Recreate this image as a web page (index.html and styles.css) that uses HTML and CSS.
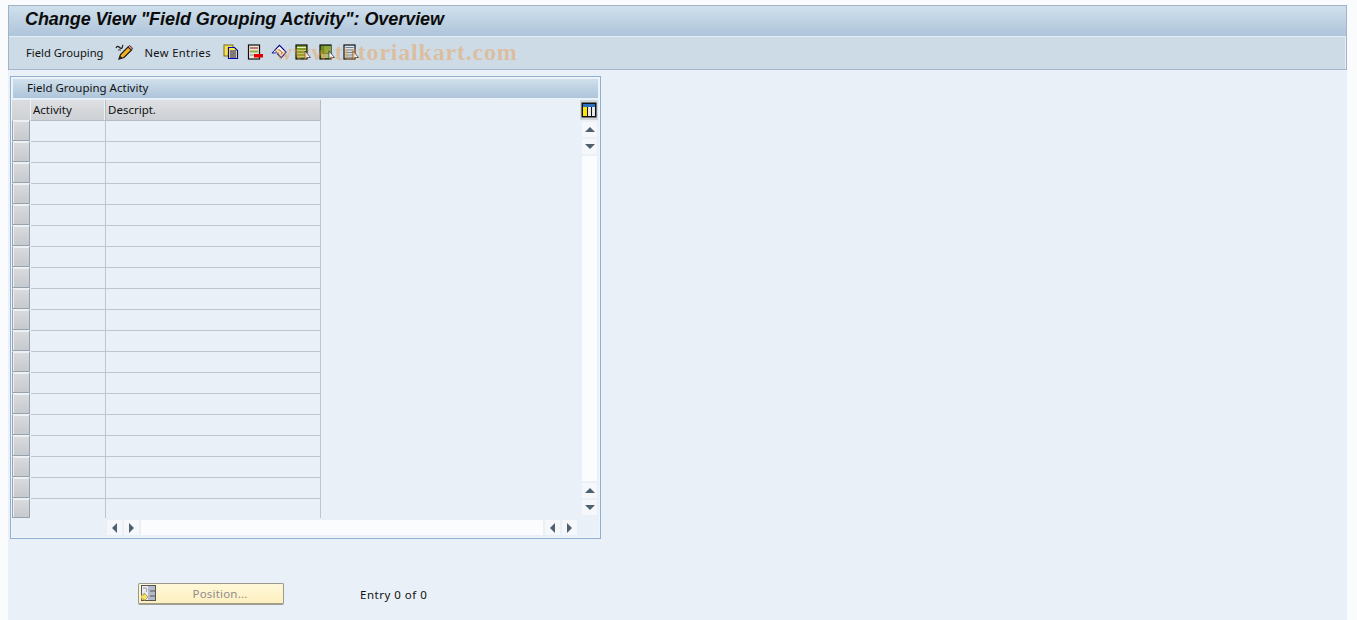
FILE: index.html
```html
<!DOCTYPE html>
<html lang="en">
<head>
<meta charset="utf-8">
<title>Change View "Field Grouping Activity": Overview</title>
<link rel="stylesheet" href="styles.css">
</head>
<body>
<div class="page">
  <header class="chrome">
    <h1 class="title">Change View "Field Grouping Activity": Overview</h1>
    <nav class="toolbar">
      <span class="tool-text">Field Grouping</span>
      <svg class="ico pencil" viewBox="0 0 18 17"><path d="M1 4c1-2 2-2 3-1s2 2 3 1 0-2 1-3" fill="none" stroke="#222" stroke-width="1.200"/><path d="M3 6.500c1-1 2-1 3 0" fill="none" stroke="#222"/><path d="M4 15l1.500-4.500L13 3l3.500 3L9 13.500z" fill="#f6b01c" stroke="#1a1a1a" stroke-width="1.200"/><path d="M13 3l1.500-1.500L17.500 4 16.500 6z" fill="#e88a8a" stroke="#1a1a1a" stroke-width=".8"/><path d="M4 15l1.200-3.200 2 2z" fill="#222"/></svg>
      <span class="tool-text new">New Entries</span>
      <span class="icons">
        <svg class="ico" viewBox="0 0 16 16"><rect x="1" y="1" width="9" height="11" fill="#f4e05a" stroke="#7a6a10"/><path d="M5.500 3.500h6l3 3v8h-9z" fill="#fff23a" stroke="#0000b0" stroke-width="1.200"/><path d="M7 7h6M7 9h6M7 11h6M7 13h6" stroke="#0000b0"/></svg>
        <svg class="ico" viewBox="0 0 16 16"><rect x="1.500" y="1" width="11" height="14" fill="#efe7dc" stroke="#111" stroke-width="1.200"/><path d="M3 4h8" stroke="#a85a48" stroke-width="1.500"/><path d="M3 7.500h8" stroke="#8fae48" stroke-width="2"/><path d="M3 11h4" stroke="#888"/><rect x="7" y="10" width="9" height="3.500" fill="#e80000"/></svg>
        <svg class="ico" viewBox="0 0 17 16"><path d="M1 9l3-3 2 2-1 1z" fill="#fff" stroke="#00008a"/><path d="M4 6l5-5 7 7-5 6-4-4 1-1" fill="#fff" stroke="#00008a" stroke-width="1.200"/><path d="M8 5l4 3.500-1.500 2" fill="none" stroke="#b08a50" stroke-width="1.400"/></svg>
        <svg class="ico" viewBox="0 0 16 16"><rect x="1" y="1" width="11" height="14" fill="#7f9d2a" stroke="#111" stroke-width="1.200"/><path d="M2 3.500h9" stroke="#e3efc5" stroke-width="1"/><path d="M2 6.500h9M2 9.500h9M2 12.500h9" stroke="#cfe0a0" stroke-width=".8"/><path d="M10 7v8l2-1.500 3.500 0z" fill="#fff" stroke="#222" stroke-width=".7"/></svg>
        <svg class="ico" viewBox="0 0 16 16"><rect x="1" y="1" width="11" height="14" fill="#6c8c22" stroke="#111" stroke-width="1.200"/><path d="M5 2v7h7V2z" fill="#8aa63a"/><path d="M2 11h9M2 13h9" stroke="#e6ecd8"/><path d="M10 7v8l2-1.500 3.500 0z" fill="#fff" stroke="#222" stroke-width=".7"/></svg>
        <svg class="ico" viewBox="0 0 16 16"><rect x="1" y="1" width="11" height="14" fill="#dce4ea" stroke="#111" stroke-width="1.200"/><path d="M2.500 3.500h8M2.500 6h8M2.500 8.500h8M2.500 11h8M2.500 13.200h8" stroke="#6d8494" stroke-width="1.100"/><path d="M10 7v8l2-1.500 3.500 0z" fill="#fff" stroke="#222" stroke-width=".7"/></svg>
      </span>
      <span class="watermark">www.tutorialkart.com</span>
    </nav>
  </header>

  <main class="content">
    <section class="panel">
      <h2 class="panel-title">Field Grouping Activity</h2>
      <div class="table-area">
        <div class="grid">
          <div class="row head">
            <div class="sel corner"></div>
            <div class="cell col-a">Activity</div>
            <div class="cell col-d">Descript.</div>
          </div>
          <div class="row first"><div class="sel"></div><div class="cell col-a"></div><div class="cell col-d"></div></div>
          <div class="row"><div class="sel"></div><div class="cell col-a"></div><div class="cell col-d"></div></div>
          <div class="row"><div class="sel"></div><div class="cell col-a"></div><div class="cell col-d"></div></div>
          <div class="row"><div class="sel"></div><div class="cell col-a"></div><div class="cell col-d"></div></div>
          <div class="row"><div class="sel"></div><div class="cell col-a"></div><div class="cell col-d"></div></div>
          <div class="row"><div class="sel"></div><div class="cell col-a"></div><div class="cell col-d"></div></div>
          <div class="row"><div class="sel"></div><div class="cell col-a"></div><div class="cell col-d"></div></div>
          <div class="row"><div class="sel"></div><div class="cell col-a"></div><div class="cell col-d"></div></div>
          <div class="row"><div class="sel"></div><div class="cell col-a"></div><div class="cell col-d"></div></div>
          <div class="row"><div class="sel"></div><div class="cell col-a"></div><div class="cell col-d"></div></div>
          <div class="row"><div class="sel"></div><div class="cell col-a"></div><div class="cell col-d"></div></div>
          <div class="row"><div class="sel"></div><div class="cell col-a"></div><div class="cell col-d"></div></div>
          <div class="row"><div class="sel"></div><div class="cell col-a"></div><div class="cell col-d"></div></div>
          <div class="row"><div class="sel"></div><div class="cell col-a"></div><div class="cell col-d"></div></div>
          <div class="row"><div class="sel"></div><div class="cell col-a"></div><div class="cell col-d"></div></div>
          <div class="row"><div class="sel"></div><div class="cell col-a"></div><div class="cell col-d"></div></div>
          <div class="row"><div class="sel"></div><div class="cell col-a"></div><div class="cell col-d"></div></div>
          <div class="row"><div class="sel"></div><div class="cell col-a"></div><div class="cell col-d"></div></div>
          <div class="row last"><div class="sel"></div><div class="cell col-a"></div><div class="cell col-d"></div></div>
          <div class="hscroll">
            <span class="sb-btn"><i class="tri left"></i></span>
            <span class="sb-btn"><i class="tri right"></i></span>
            <span class="track"></span>
            <span class="sb-btn"><i class="tri left"></i></span>
            <span class="sb-btn"><i class="tri right"></i></span>
          </div>
        </div>
        <aside class="vscroll">
          <span class="config">
            <svg viewBox="0 0 16 16" width="16" height="16"><rect x=".5" y=".5" width="15" height="15" fill="#111"/><rect x="2" y="2" width="12" height="3" fill="#2a6fc0"/><rect x="2" y="5" width="4" height="9" fill="#ffe600"/><rect x="7" y="5" width="3" height="9" fill="#e8e8e8"/><rect x="11" y="5" width="3" height="9" fill="#e8e8e8"/></svg>
          </span>
          <span class="sb-btn v"><i class="tri up"></i></span>
          <span class="sb-btn v"><i class="tri down"></i></span>
          <span class="track"></span>
          <span class="sb-btn v"><i class="tri up"></i></span>
          <span class="sb-btn v"><i class="tri down"></i></span>
        </aside>
      </div>
    </section>

    <div class="footer-row">
      <button class="position" type="button">
        <svg class="pos-ico" viewBox="0 0 16 16" width="16" height="16"><rect x=".5" y=".5" width="14" height="15" fill="#b5b9cc" stroke="#555"/><rect x="1" y="1" width="6" height="14" fill="#e8ecf2"/><path d="M9 6h5M9 11h5" stroke="#555"/><path d="M2 3h3l1 2-1 2" fill="none" stroke="#999"/><path d="M0 10h3V8l4 4-4 4v-2H0z" fill="#f7e56a" stroke="#8a7a20" stroke-width=".6"/></svg>
        <span>Position...</span>
      </button>
      <span class="entry">Entry 0 of 0</span>
    </div>
  </main>
</div>
</body>
</html>
```

FILE: styles.css
```css
* { box-sizing: border-box; }

html, body {
  margin: 0;
  height: 100%;
  background: #fafbfd;
  overflow: hidden;
}

body {
  font-family: "Noto Sans", "Liberation Sans", sans-serif;
  font-size: 11.5px;
  color: #111;
}

.page {
  width: 1339px;
  height: 620px;
  margin-left: 8px;
  padding-top: 5px;
  background: linear-gradient(#fafbfd 0, #fafbfd 5px, #e9f0f7 5px);
}

.chrome {
  border: 1px solid #9fb4c9;
  border-bottom: 1px solid #a3b6ca;
  height: 65px;
}

.title {
  margin: 0;
  height: 31px;
  padding-left: 16px;
  font-family: "Liberation Sans", Arial, sans-serif;
  font-size: 18px;
  font-weight: bold;
  font-style: italic;
  line-height: 27px;
  letter-spacing: -.06px;
  color: #0c0c0c;
  background: linear-gradient(#d0e0ec, #aec4da);
  border-bottom: 1px solid #e7eef5;
  white-space: nowrap;
}

.toolbar {
  position: relative;
  display: flex;
  align-items: center;
  height: 32px;
  padding: 0 0 2px 17px;
  background: #cddbe6;
  border-right: 1px solid #e7eef5;
}

.tool-text {
  font-size: 11.2px;
  white-space: nowrap;
  color: #111;
}

.tool-text.new {
  margin-left: 11px;
  letter-spacing: .35px;
}

.ico {
  display: block;
  width: 16px;
  height: 16px;
  flex: none;
}

.pencil {
  width: 18px;
  height: 17px;
  margin-left: 12px;
}

.icons {
  display: flex;
  align-items: center;
  gap: 8px;
  margin-left: 12px;
}

.watermark {
  position: absolute;
  left: 266px;
  top: 1px;
  font-family: "Liberation Serif", serif;
  font-size: 24px;
  font-weight: bold;
  line-height: 28px;
  letter-spacing: .8px;
  color: rgba(240, 150, 60, .42);
  white-space: nowrap;
  pointer-events: none;
}

.content {
  padding: 6px 0 0 2px;
}

.panel {
  width: 591px;
  height: 463px;
  border: 1px solid #8fb0d0;
  padding: 2px 1px 0;
  box-shadow: inset 0 0 0 1px #f0f5fa;
}

.panel-title {
  margin: 0 1px;
  height: 19px;
  padding-left: 14px;
  font-size: 11.5px;
  font-weight: normal;
  line-height: 17px;
  background: linear-gradient(#d0e0ec, #aec4da);
  color: #111;
}

.table-area {
  display: flex;
  justify-content: space-between;
  padding-top: 2px;
}

.grid {
  width: 310px;
}

.row {
  display: flex;
  height: 21px;
}

.sel {
  width: 18px;
  margin-right: 1px;
  flex: none;
  background: linear-gradient(#d9dbde, #c6c9cd);
  border: 1px solid #98a2ac;
  border-top-color: #eef1f4;
  box-shadow: inset 1px 1px 0 #eef1f4;
}

.cell {
  border-right: 1px solid #bcc6d2;
  border-top: 1px solid #bcc6d2;
  padding-left: 2px;
  line-height: 20px;
}

.col-a { width: 75px; }
.col-d { width: 215px; }

.row.first .cell { border-top: 0; }
.row.last { height: 20px; }

.head { height: 20px; }

.head .corner {
  height: 21px;
  margin-right: 0;
  width: 19px;
  background: linear-gradient(#dadcdf, #cfd2d5);
  border: 0;
  border-right: 1px solid #eef1f4;
  border-bottom: 1px solid #b4bcc4;
  box-shadow: none;
}

.head .cell {
  height: 21px;
  background: linear-gradient(#dee0e3, #cdd0d4);
  border-top: 0;
  border-bottom: 1px solid #b4bcc4;
  border-right: 1px solid #b4bcc4;
}

.head .col-a {
  box-shadow: inset -1px 0 0 #eef1f4;
}

.hscroll {
  display: flex;
  gap: 2px;
  height: 15px;
  margin: 2px 0 0 95px;
  width: 470px;
}

.sb-btn {
  display: flex;
  align-items: center;
  justify-content: center;
  width: 15px;
  height: 15px;
  flex: none;
  background: #f5f7fa;
}

.track {
  flex: 1;
  background: #fbfcfd;
}

.tri {
  display: block;
  width: 0;
  height: 0;
  border-style: solid;
  border-color: transparent;
}

.tri.left  { border-width: 5px 5px 5px 0; border-right-color: #4d6070; }
.tri.right { border-width: 5px 0 5px 5px; border-left-color: #4d6070; }
.tri.up    { border-width: 0 5px 5px;     border-bottom-color: #4d6070; }
.tri.down  { border-width: 5px 5px 0;     border-top-color: #4d6070; }

.vscroll {
  display: flex;
  flex-direction: column;
  align-items: flex-end;
  gap: 2px;
  height: 415px;
  width: 18px;
  margin-right: 1px;
}

.config {
  display: flex;
  align-items: center;
  justify-content: center;
  width: 18px;
  height: 20px;
  background: #cfd6dc;
}

.sb-btn.v,
.vscroll .track {
  width: 15px;
  margin-right: 1px;
}

.footer-row {
  display: flex;
  align-items: center;
  height: 22px;
  margin-top: 44px;
  padding-left: 128px;
}

.position {
  position: relative;
  display: flex;
  align-items: center;
  justify-content: center;
  width: 146px;
  height: 22px;
  padding: 0 0 0 18px;
  font: inherit;
  letter-spacing: .2px;
  color: #8d8d8d;
  background: linear-gradient(#fff8d8, #fdefc0);
  border: 1px solid #9a9a8c;
  border-bottom: 2px solid #9f9f8f;
  border-radius: 2px;
}

.pos-ico {
  position: absolute;
  left: 2px;
  top: 1px;
}

.entry {
  margin-left: 76px;
  letter-spacing: .5px;
  color: #111;
}
```
